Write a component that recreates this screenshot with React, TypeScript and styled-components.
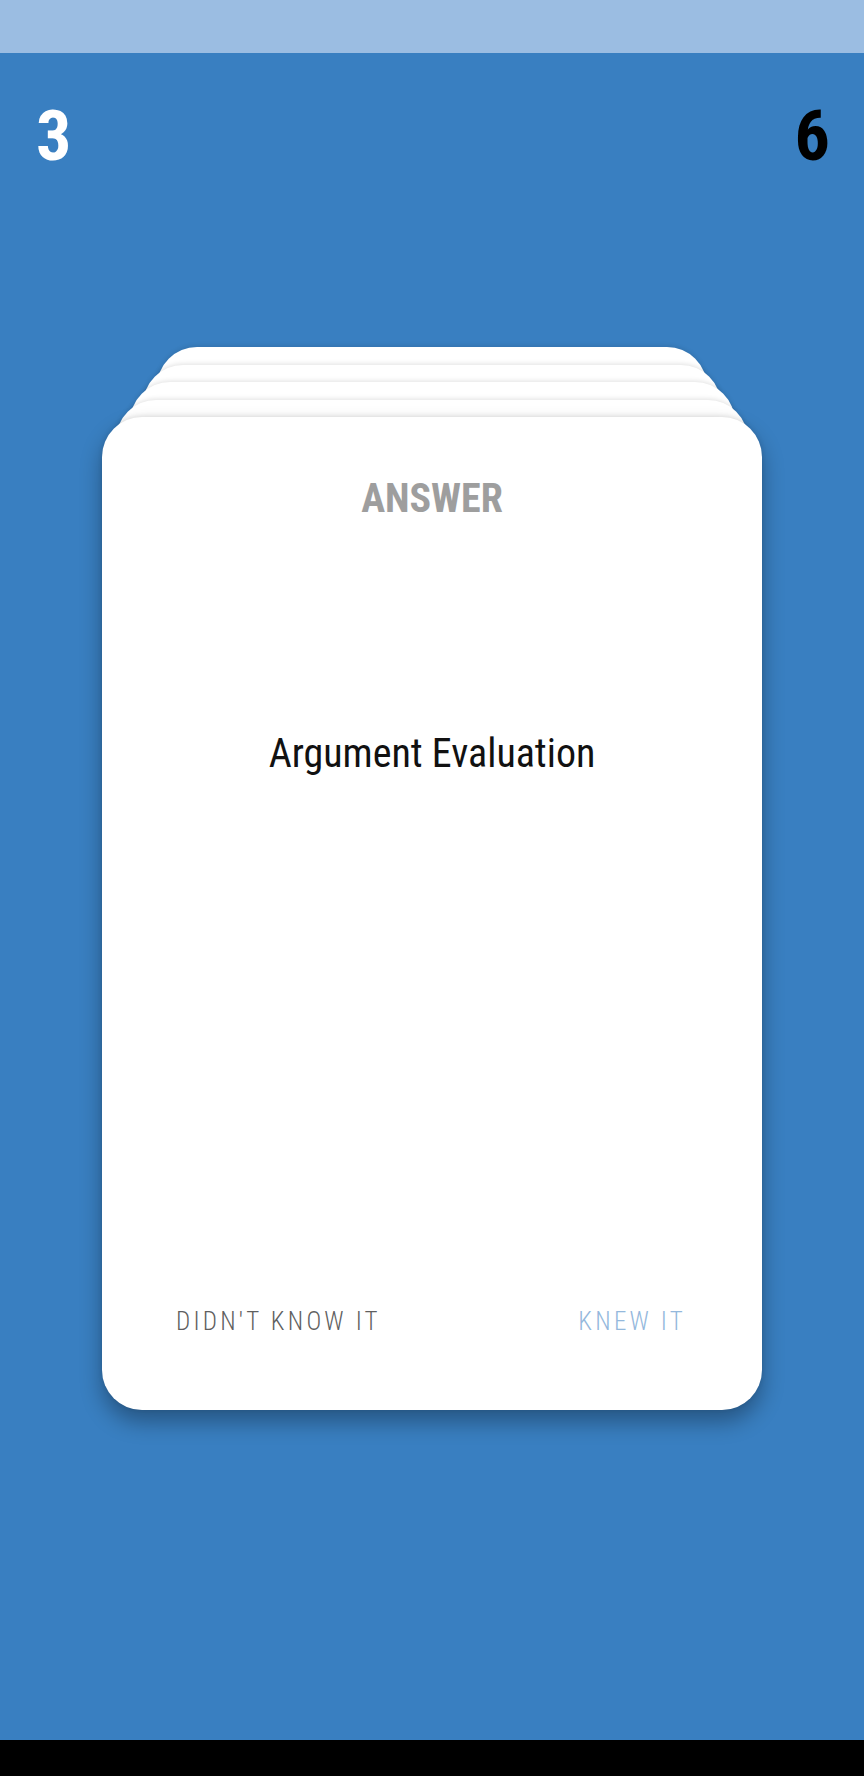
import React from "react";
import styled, { createGlobalStyle } from "styled-components";

const Global = createGlobalStyle`
  html, body { margin: 0; padding: 0; background: #000; }
  body { font-family: "Roboto Condensed", Roboto, "Liberation Sans", sans-serif; font-stretch: condensed; }
  * { box-sizing: border-box; }
`;

const Screen = styled.div`
  width: 864px;
  height: 1776px;
  display: flex;
  flex-direction: column;
  overflow: hidden;
`;

const StatusBar = styled.div`
  height: 53px;
  flex: none;
  background: #9bbde2;
`;

const Main = styled.main`
  flex: 1;
  background: #397fc1;
  display: flex;
  flex-direction: column;
`;

const NavBar = styled.div`
  height: 36px;
  flex: none;
  background: #000;
`;

const Header = styled.div`
  display: flex;
  justify-content: space-between;
  padding: 48px 34px 0 36px;
`;

const Count = styled.span<{ $tone: "light" | "dark" }>`
  font-size: 70px;
  line-height: 70px;
  font-weight: 700;
  color: ${(p) => (p.$tone === "light" ? "#ffffff" : "#000000")};
`;

const Stack = styled.div`
  position: relative;
  width: 660px;
  margin: 246px auto 0;
`;

const BackCard = styled.div<{ $depth: number }>`
  position: absolute;
  top: ${(p) => -17.5 * p.$depth}px;
  left: ${(p) => 13.75 * p.$depth}px;
  right: ${(p) => 13.75 * p.$depth}px;
  height: 200px;
  background: #ffffff;
  border-radius: 40px;
  box-shadow: 0 -1px 5px rgba(0, 0, 0, 0.12);
`;

const Card = styled.section`
  position: relative;
  height: 993px;
  background: #ffffff;
  border-radius: 40px;
  box-shadow: 0 -1px 5px rgba(0, 0, 0, 0.1), 0 12px 22px rgba(0, 0, 0, 0.32);
  display: flex;
  flex-direction: column;
  align-items: center;
  padding-top: 62px;
`;

const Title = styled.h2`
  margin: 0;
  font-size: 40px;
  line-height: 40px;
  font-weight: 700;
  color: #9e9e9e;
`;

const AnswerText = styled.p`
  margin: 215px 0 0;
  font-size: 40px;
  line-height: 40px;
  font-weight: 400;
  color: #111;
`;

const Actions = styled.div`
  margin-top: auto;
  align-self: stretch;
  display: flex;
  justify-content: space-between;
  padding: 0 76px 76px 74px;
`;

const Action = styled.button<{ $tone: "neutral" | "accent" }>`
  border: none;
  background: none;
  padding: 0;
  font-family: inherit;
  font-stretch: condensed;
  font-size: 25px;
  line-height: 25px;
  font-weight: 300;
  letter-spacing: 3.2px;
  color: ${(p) => (p.$tone === "accent" ? "#94b8dc" : "#5f5f5f")};
`;

export default function App() {
  return (
    <>
      <Global />
      <Screen>
        <StatusBar />
        <Main>
          <Header>
            <Count $tone="light">3</Count>
            <Count $tone="dark">6</Count>
          </Header>
          <Stack>
            {[4, 3, 2, 1].map((d) => (
              <BackCard key={d} $depth={d} />
            ))}
            <Card>
              <Title>ANSWER</Title>
              <AnswerText>Argument Evaluation</AnswerText>
              <Actions>
                <Action $tone="neutral">DIDN'T KNOW IT</Action>
                <Action $tone="accent">KNEW IT</Action>
              </Actions>
            </Card>
          </Stack>
        </Main>
        <NavBar />
      </Screen>
    </>
  );
}
